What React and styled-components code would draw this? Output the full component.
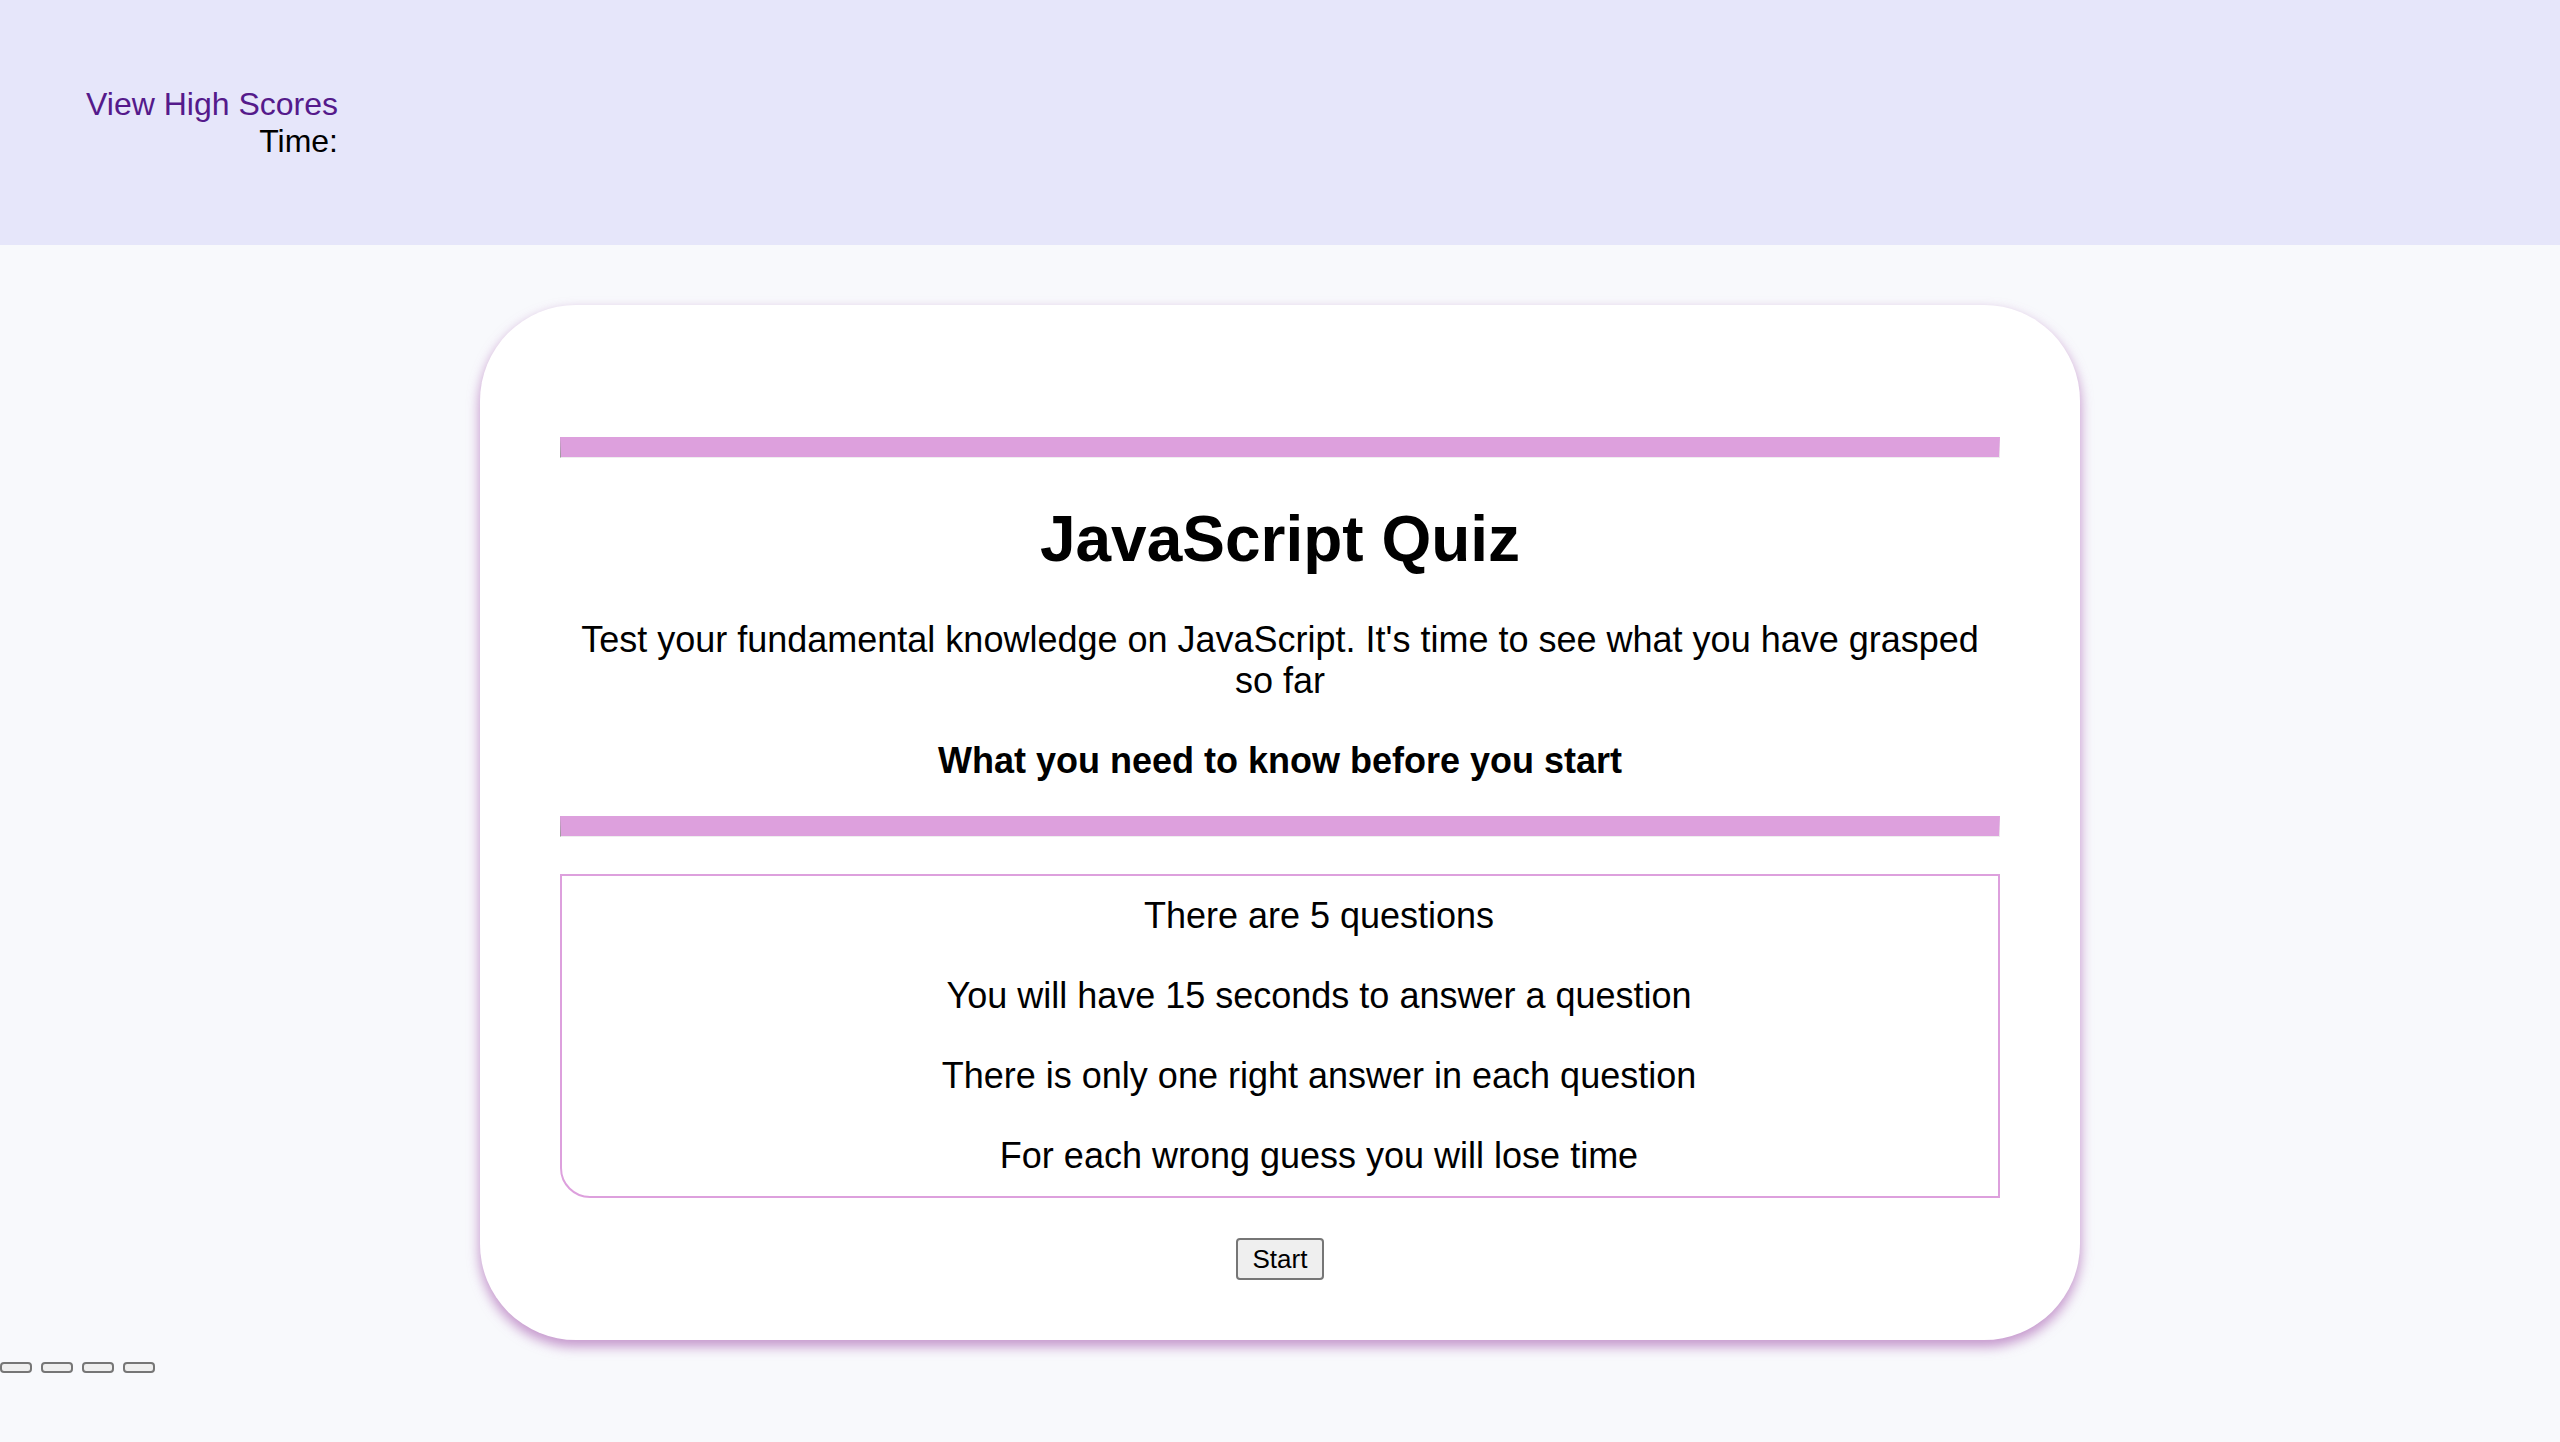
import React from "react";
import styled, { createGlobalStyle } from "styled-components";

const GlobalStyle = createGlobalStyle`
	body {
		margin: 0;
		background: #f8f9fc;
		font-family: "Liberation Sans", Arial, sans-serif;
		font-size: 32px;
		color: #000000;
	}
`;

const Header = styled.header`
	height: 245px;
	background: lavender;
	display: flex;
	align-items: center;
`;

const Nav = styled.nav`
	margin-left: 86px;
	display: flex;
	flex-direction: column;
	align-items: flex-end;
	line-height: 37px;
`;

const ScoresLink = styled.a`
	color: #551a8b;
	text-decoration: none;
`;

const Card = styled.main`
	width: 1600px;
	box-sizing: border-box;
	margin: 60px auto 22px;
	padding: 132px 80px 60px;
	background: #ffffff;
	border-radius: 96px;
	box-shadow: 0 6px 12px 1px rgba(165, 90, 175, 0.6);
	display: flex;
	flex-direction: column;
	align-items: center;
	text-align: center;
	font-size: 36px;
`;

const Bar = styled.hr`
	width: 100%;
	box-sizing: border-box;
	margin: ${(props) => props.$gap || 0}px 0 0;
	border-top: 20px solid plum;
`;

const Title = styled.h1`
	margin: 44px 0 0;
	font-size: 64px;
	font-weight: bold;
	line-height: 74px;
`;

const Intro = styled.p`
	margin: 43px 0 0;
	line-height: 41px;
`;

const Subtitle = styled.h2`
	margin: 39px 0 0;
	font-size: 36px;
	font-weight: bold;
	line-height: 41px;
`;

const Rules = styled.ul`
	width: 100%;
	box-sizing: border-box;
	margin: 37px 0 0;
	padding: 0 0 0 78px;
	list-style: none;
	border: 2px solid plum;
	border-bottom-left-radius: 30px;
`;

const Rule = styled.li`
	line-height: 80px;
`;

const StartButton = styled.button`
	margin-top: 40px;
	padding: 4px 15px;
	font-family: "Liberation Sans", Arial, sans-serif;
	font-size: 26px;
	line-height: 30px;
	color: #000000;
	background: #efefef;
	border: 2px solid #767676;
	border-radius: 4px;
`;

const Choices = styled.div`
	display: flex;
	gap: 9px;
`;

const Choice = styled.button`
	width: 32px;
	height: 11px;
	padding: 0;
	background: #efefef;
	border: 2px solid #767676;
	border-radius: 4px;
`;

const rules = [
	"There are 5 questions",
	"You will have 15 seconds to answer a question",
	"There is only one right answer in each question",
	"For each wrong guess you will lose time",
];

export default function App() {
	return (
		<>
			<GlobalStyle />
			<Header>
				<Nav>
					<ScoresLink href="#highscores">View High Scores</ScoresLink>
					<span>Time:</span>
				</Nav>
			</Header>

			<Card>
				<Bar />
				<Title>JavaScript Quiz</Title>
				<Intro>
					Test your fundamental knowledge on JavaScript. It's time to see what
					you have grasped so far
				</Intro>
				<Subtitle>What you need to know before you start</Subtitle>
				<Bar $gap={35} />
				<Rules>
					{rules.map((rule) => (
						<Rule key={rule}>{rule}</Rule>
					))}
				</Rules>
				<StartButton>Start</StartButton>
			</Card>

			<Choices>
				<Choice />
				<Choice />
				<Choice />
				<Choice />
			</Choices>
		</>
	);
}
